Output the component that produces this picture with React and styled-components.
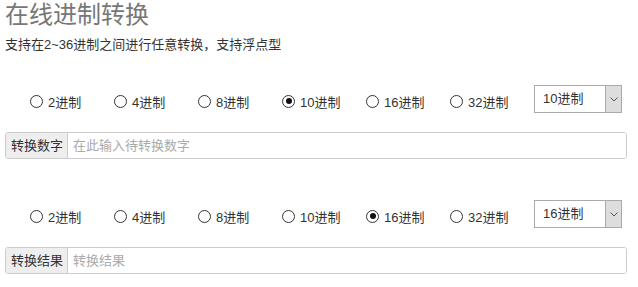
import React, { useState } from 'react'
import styled, { createGlobalStyle } from 'styled-components'

const GlobalStyle = createGlobalStyle`
  body {
    margin: 0;
    background: #fff;
    font-family: "Liberation Sans", "Noto Sans CJK SC", sans-serif;
    color: #333;
  }
`

const bases = [2, 4, 8, 10, 16, 32]

function RadioRow({ value, onChange }) {
  return (
    <Row>
      <Radios>
        {bases.map((b) => (
          <RadioItem key={b} onClick={() => onChange(b)}>
            <Circle $checked={b === value} />
            <span>{b}进制</span>
          </RadioItem>
        ))}
      </Radios>
      <Select>
        <SelectText>{value}进制</SelectText>
        <ArrowBox>
          <svg width="8" height="5" viewBox="0 0 8 5">
            <path d="M0.5 0.5 L4 4 L7.5 0.5" fill="none" stroke="#555" strokeWidth="1" />
          </svg>
        </ArrowBox>
      </Select>
    </Row>
  )
}

function App() {
  const [from, setFrom] = useState(10)
  const [to, setTo] = useState(16)

  return (
    <Container>
      <GlobalStyle />
      <Title>在线进制转换</Title>
      <SubTitle>支持在2~36进制之间进行任意转换，支持浮点型</SubTitle>

      <Section>
        <RadioRow value={from} onChange={setFrom} />
        <InputGroup>
          <Addon>转换数字</Addon>
          <Field placeholder="在此输入待转换数字" />
        </InputGroup>
      </Section>

      <Section $second>
        <RadioRow value={to} onChange={setTo} />
        <InputGroup>
          <Addon>转换结果</Addon>
          <Field placeholder="转换结果" readOnly />
        </InputGroup>
      </Section>
    </Container>
  )
}

export default App

const Container = styled.div`
  padding: 0 11px 0 5px;
`
const Title = styled.h1`
  margin: 0;
  font-size: 24px;
  line-height: 29px;
  font-weight: 400;
  color: #777;
`
const SubTitle = styled.p`
  margin: 7px 0 0;
  font-size: 13px;
  line-height: 18px;
  color: #333;
`
const Section = styled.div`
  margin-top: ${(p) => (p.$second ? '41px' : '31px')};
`
const Row = styled.div`
  display: flex;
  align-items: center;
  height: 28px;
`
const Radios = styled.div`
  display: flex;
  flex: 1;
  padding-left: 25px;
  padding-top: 4px;
`
const RadioItem = styled.label`
  width: 84px;
  display: flex;
  align-items: center;
  gap: 5px;
  font-size: 13px;
  color: #333;
  cursor: pointer;
`
const Circle = styled.span`
  width: 11px;
  height: 11px;
  border: 1px solid #333;
  border-radius: 50%;
  display: flex;
  align-items: center;
  justify-content: center;

  &::after {
    content: '';
    width: 6px;
    height: 6px;
    border-radius: 50%;
    background: #111;
    display: ${(p) => (p.$checked ? 'block' : 'none')};
  }
`
const Select = styled.div`
  width: 87px;
  height: 26px;
  border: 1px solid #aaa;
  display: flex;
  background: #fff;
  margin-right: 5px;
`
const SelectText = styled.div`
  flex: 1;
  font-size: 13px;
  line-height: 26px;
  padding-left: 8px;
  color: #333;
`
const ArrowBox = styled.div`
  width: 15px;
  background: #ddd;
  border-left: 1px solid #aaa;
  display: flex;
  align-items: center;
  justify-content: center;
`
const InputGroup = styled.div`
  display: flex;
  height: 27px;
  margin-top: 19px;
  border: 1px solid #ccc;
  border-radius: 3px;
  overflow: hidden;
  box-sizing: border-box;
`
const Addon = styled.div`
  background: #eee;
  border-right: 1px solid #ccc;
  padding: 0 4px 0 5px;
  font-size: 13px;
  line-height: 25px;
  color: #333;
  white-space: nowrap;
`
const Field = styled.input`
  flex: 1;
  border: none;
  outline: none;
  padding: 0 5px;
  font-size: 13px;
  font-family: inherit;
  color: #333;

  &::placeholder {
    color: #aaa;
  }
`
